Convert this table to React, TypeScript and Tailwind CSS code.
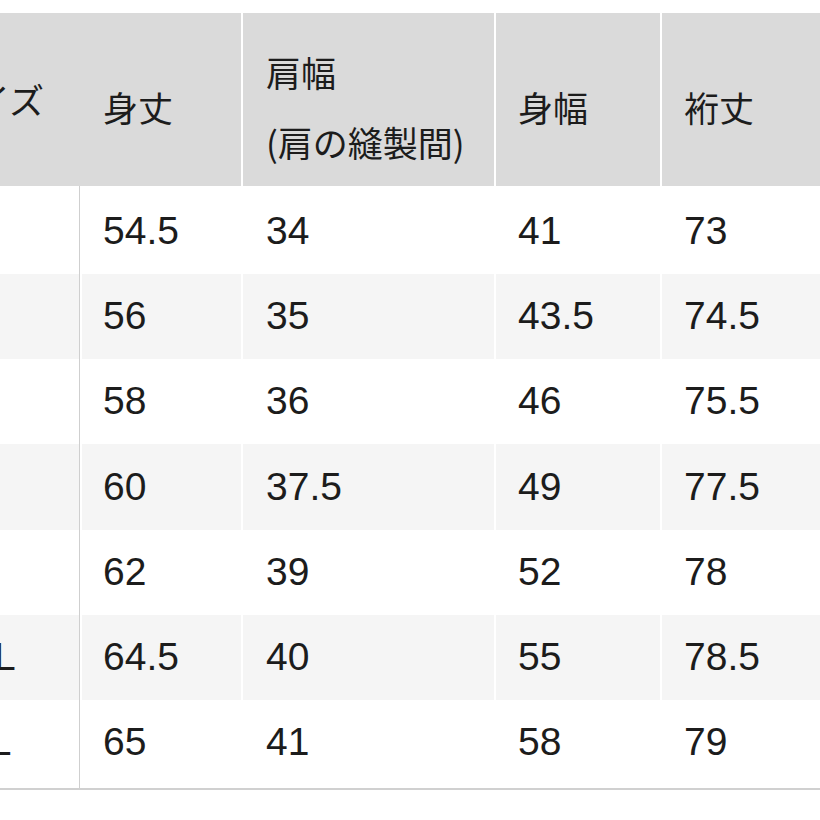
import React from "react";

const rows = [
  ["XS", "54.5", "34", "41", "73"],
  ["S", "56", "35", "43.5", "74.5"],
  ["M", "58", "36", "46", "75.5"],
  ["L", "60", "37.5", "49", "77.5"],
  ["XL", "62", "39", "52", "78"],
  ["XXL", "64.5", "40", "55", "78.5"],
  ["3XL", "65", "41", "58", "79"],
];

const jp = "font-['Noto_Sans_CJK_JP',sans-serif]";
const num = "font-['Liberation_Sans',Arial,sans-serif]";

export default function App() {
  return (
    <div className="w-[820px] h-[820px] overflow-hidden bg-white pt-[13px] text-[#1c1c1c]">
      <div className="ml-[-80px] w-[940px] flex flex-col">
        {/* HEADER */}
        <div className={`flex h-[173px] text-[35px] ${jp}`}>
          <div className="w-[162px] shrink-0 bg-[#dadada] flex items-center pl-[20px] whitespace-nowrap">
            サイズ
          </div>
          <div className="w-[159px] shrink-0 mr-[2px] bg-[#dadada] flex items-center pl-[21px] pt-[14px] leading-[70px]">
            身丈
          </div>
          <div className="w-[251px] shrink-0 mr-[2px] bg-[#dadada] flex items-center pl-[23px] pt-[14px] leading-[70px]">
            <div>
              <div>肩幅</div>
              <div>(肩の縫製間)</div>
            </div>
          </div>
          <div className="w-[164px] shrink-0 mr-[2px] bg-[#dadada] flex items-center pl-[22px] pt-[14px] leading-[70px]">
            身幅
          </div>
          <div className="w-[170px] shrink-0 bg-[#dadada] flex items-center pl-[22px] pt-[14px] leading-[70px]">
            裄丈
          </div>
        </div>

        {/* BODY */}
        <div className={`flex flex-col text-[39px] ${num}`}>
          {rows.map((r, i) => {
            const bg = i % 2 === 1 ? "bg-[#f5f5f5]" : "bg-white";
            const size =
              i === 0
                ? "h-[87.75px] pt-[2.5px]"
                : i === rows.length - 1
                ? "h-[88.25px] pb-[3px]"
                : "h-[85.25px]";
            return (
              <div key={r[0]} className={`flex ${size.split(" ")[0]}`}>
                <div
                  className={`w-[160px] shrink-0 mr-[2px] border-r-[1.5px] border-[#cfcfcf] flex items-center pl-[22px] whitespace-nowrap ${bg} ${size}`}
                >
                  {r[0]}
                </div>
                <div className={`w-[159px] shrink-0 mr-[2px] flex items-center pl-[21px] ${bg} ${size}`}>
                  {r[1]}
                </div>
                <div className={`w-[251px] shrink-0 mr-[2px] flex items-center pl-[23px] ${bg} ${size}`}>
                  {r[2]}
                </div>
                <div className={`w-[164px] shrink-0 mr-[2px] flex items-center pl-[22px] ${bg} ${size}`}>
                  {r[3]}
                </div>
                <div className={`w-[170px] shrink-0 flex items-center pl-[22px] ${bg} ${size}`}>
                  {r[4]}
                </div>
              </div>
            );
          })}
        </div>
        <div className="h-[1.5px] bg-[#d0d0d0]" />
      </div>
    </div>
  );
}
